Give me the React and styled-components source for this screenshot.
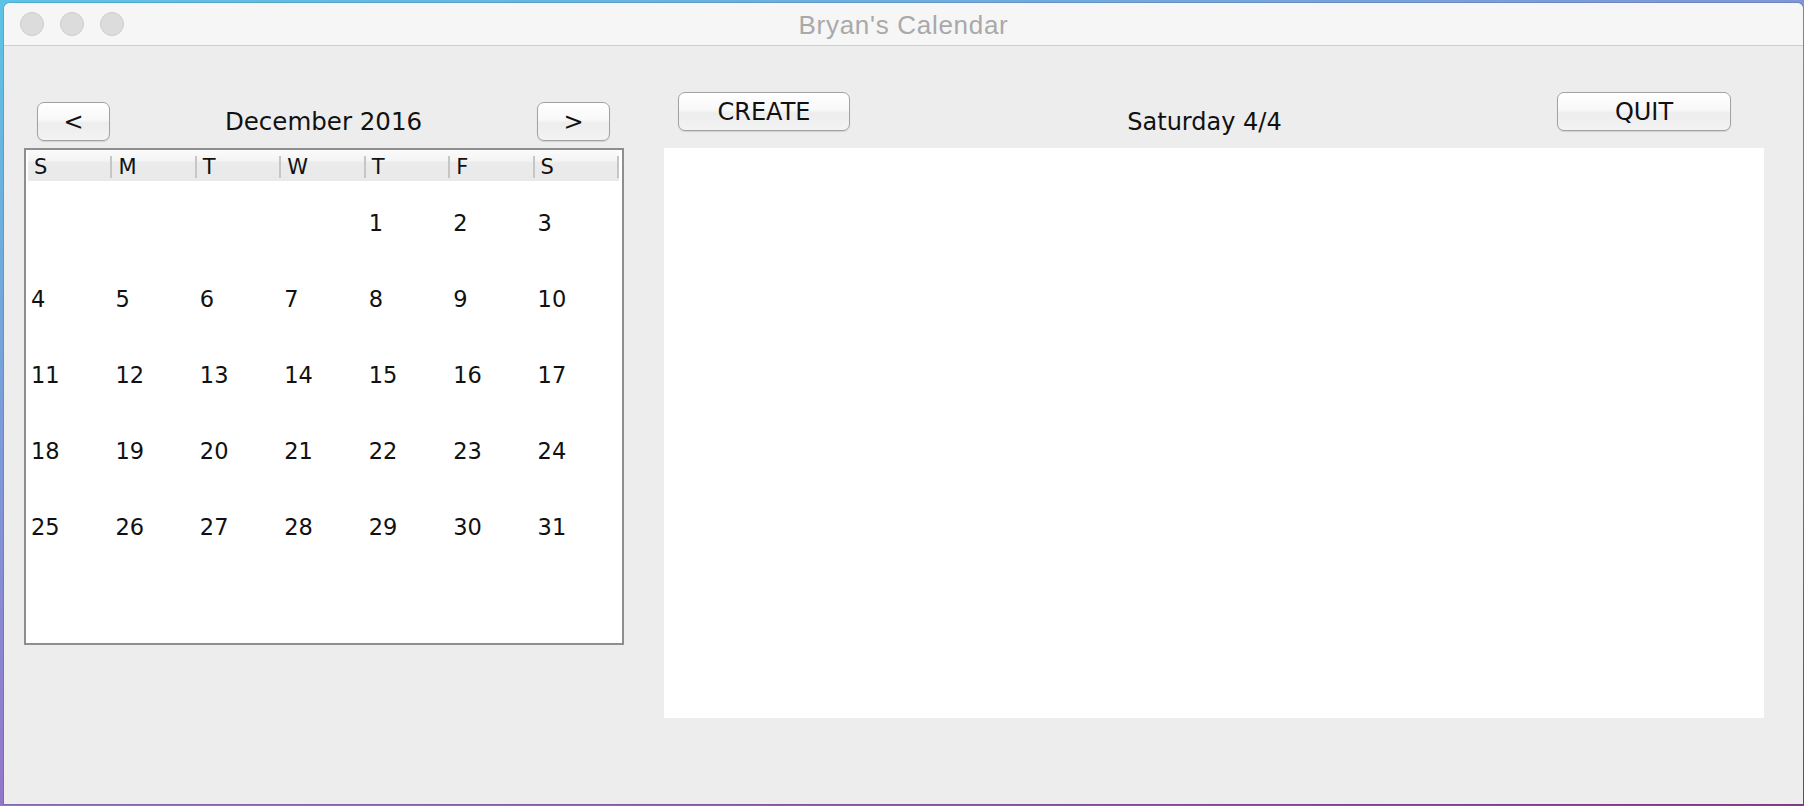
import React from 'react';
import styled, { createGlobalStyle } from 'styled-components';

const GlobalStyle = createGlobalStyle`
    html, body {
        margin: 0;
        padding: 0;
        height: 806px;
        overflow: hidden;
    }
    body {
        font-family: "DejaVu Sans", "Liberation Sans", sans-serif;
    }
`;

const Desktop = styled.div`
    width: 1804px;
    height: 806px;
    padding: 3px 0 0 4px;
    box-sizing: border-box;
    background: linear-gradient(165deg, #5cc3e6 0%, #7d9ad8 35%, #9b6cc4 70%, #8a3f8f 100%);
`;

const Window = styled.div`
    width: 1799px;
    height: 801px;
    display: flex;
    flex-direction: column;
    background: #ededed;
    border-radius: 6px 6px 0 0;
    box-shadow: 0 0 0 1px rgba(0, 0, 0, 0.12);
    overflow: hidden;
`;

const TitleBar = styled.div`
    height: 42px;
    display: grid;
    grid-template-columns: 1fr auto 1fr;
    align-items: center;
    background: #f6f6f6;
    border-bottom: 1px solid #cfcfcf;
`;

const Lights = styled.div`
    display: flex;
    gap: 16px;
    padding-left: 16px;
`;

const Light = styled.span`
    width: 22px;
    height: 22px;
    border-radius: 50%;
    background: #dcdcdc;
    border: 1px solid #cdcdcd;
`;

const Title = styled.div`
    font-family: "Liberation Sans", Arial, sans-serif;
    font-size: 26px;
    letter-spacing: 0.7px;
    color: #a9a9a9;
    padding-top: 2px;
`;

const Content = styled.div`
    display: flex;
    gap: 40px;
    padding: 46px 39px 0 20px;
`;

const LeftColumn = styled.div`
    width: 600px;
    display: flex;
    flex-direction: column;
`;

const RightColumn = styled.div`
    width: 1100px;
    display: flex;
    flex-direction: column;
`;

const NavRow = styled.div`
    height: 56px;
    box-sizing: border-box;
    padding: 3px 14px 0 13px;
    display: flex;
    align-items: center;
`;

const Button = styled.button`
    width: ${(p) => p.$width}px;
    height: 39px;
    box-sizing: border-box;
    border: 1px solid #a2a2a2;
    border-radius: 7px;
    background: linear-gradient(#ffffff 0%, #f8f8f8 45%, #ededed 55%, #f3f3f3 100%);
    box-shadow: 0 1px 1px rgba(0, 0, 0, 0.12);
    font-family: "DejaVu Sans", sans-serif;
    font-size: 24px;
    color: #111;
    padding: 0;
    cursor: pointer;
`;

const MonthLabel = styled.div`
    flex: 1;
    text-align: center;
    font-size: 24.5px;
    color: #111;
`;

const MonthTable = styled.div`
    height: 497px;
    box-sizing: border-box;
    border: 2px solid #8e8e8e;
    background: #fff;
    padding: 0 3px 0 2px;
`;

const HeaderRow = styled.div`
    display: grid;
    grid-template-columns: repeat(7, 1fr);
    height: 31px;
    background: linear-gradient(#fbfbfb 0%, #f4f4f4 35%, #ebebeb 40%, #e9e9e9 100%);
`;

const HeaderCell = styled.div`
    margin: 6px 0 3px;
    height: 22px;
    line-height: 22px;
    padding-left: 6px;
    border-right: 2px solid #c6c6c6;
    font-size: 21px;
    color: #111;
`;

const DayGrid = styled.div`
    display: grid;
    grid-template-columns: repeat(7, 1fr);
    grid-auto-rows: 76px;
`;

const DayCell = styled.div`
    display: flex;
    align-items: center;
    padding: 8px 0 0 3px;
    font-size: 22.5px;
    color: #111;
`;

const DayHeader = styled.div`
    height: 56px;
    display: flex;
    align-items: flex-start;
    padding: 0 33px 0 14px;
`;

const DayLabel = styled.div`
    flex: 1;
    align-self: center;
    text-align: center;
    padding: 4px 0 0 2px;
    font-size: 24px;
    color: #111;
`;

const DayView = styled.div`
    height: 570px;
    background: #fff;
`;

const weekdays = ['S', 'M', 'T', 'W', 'T', 'F', 'S'];
const firstDay = 4;
const daysInMonth = 31;

const cells = [];
for (let i = 0; i < firstDay; i++) cells.push('');
for (let d = 1; d <= daysInMonth; d++) cells.push(d);

const App = () => (
    <Desktop>
        <GlobalStyle />
        <Window>
            <TitleBar>
                <Lights>
                    <Light />
                    <Light />
                    <Light />
                </Lights>
                <Title>Bryan's Calendar</Title>
                <div />
            </TitleBar>
            <Content>
                <LeftColumn>
                    <NavRow>
                        <Button $width={73}>&lt;</Button>
                        <MonthLabel>December 2016</MonthLabel>
                        <Button $width={73}>&gt;</Button>
                    </NavRow>
                    <MonthTable>
                        <HeaderRow>
                            {weekdays.map((w, i) => (
                                <HeaderCell key={i}>{w}</HeaderCell>
                            ))}
                        </HeaderRow>
                        <DayGrid>
                            {cells.map((c, i) => (
                                <DayCell key={i}>{c}</DayCell>
                            ))}
                        </DayGrid>
                    </MonthTable>
                </LeftColumn>
                <RightColumn>
                    <DayHeader>
                        <Button $width={172}>CREATE</Button>
                        <DayLabel>Saturday 4/4</DayLabel>
                        <Button $width={174}>QUIT</Button>
                    </DayHeader>
                    <DayView />
                </RightColumn>
            </Content>
        </Window>
    </Desktop>
);

export default App;
